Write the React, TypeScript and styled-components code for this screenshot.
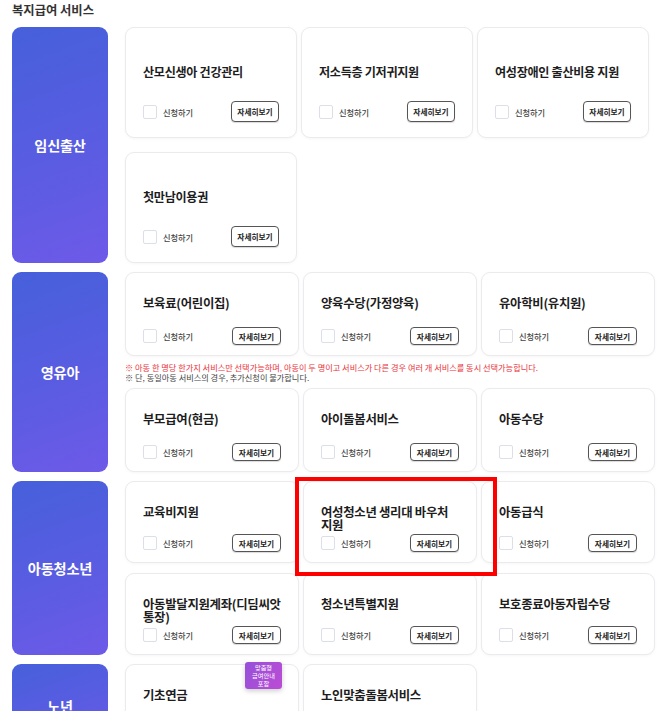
import styled, { createGlobalStyle } from "styled-components";

const Global = createGlobalStyle`
  html, body { margin: 0; padding: 0; background: #fff; }
  body { font-family: "Noto Sans CJK KR", "Noto Sans", sans-serif; color: #222; }
`;

const Frame = styled.div`
  height: 711px;
  overflow: hidden;
  padding: 0 8px 0 12px;
`;

const PageTitle = styled.h2`
  margin: 0;
  padding-top: 2px;
  height: 25px;
  font-size: 12.3px;
  line-height: 16px;
  font-weight: 700;
  color: #333;
`;

const Sections = styled.div`
  display: flex;
  flex-direction: column;
  gap: 9px;
`;

const Section = styled.section`
  display: flex;
  gap: 17px;
  align-items: stretch;
`;

const Category = styled.div`
  width: 96px;
  flex-shrink: 0;
  border-radius: 9px;
  background: linear-gradient(160deg, #4660da 0%, #5a5ce2 55%, #6e5ae8 100%);
  display: flex;
  align-items: center;
  justify-content: center;
  color: #fff;
  font-size: 14.2px;
  font-weight: 700;
  letter-spacing: -0.2px;
`;

const Body = styled.div`
  display: flex;
  flex-direction: column;
`;

const Grid = styled.div<{ $col: number; $rowGap: number }>`
  display: grid;
  grid-template-columns: repeat(3, ${p => p.$col}px);
  column-gap: 4px;
  row-gap: ${p => p.$rowGap}px;
`;

const Card = styled.div<{ $large?: boolean; $h: number }>`
  position: relative;
  box-sizing: border-box;
  height: ${p => p.$h}px;
  background: #fff;
  border: 1px solid #ebebee;
  border-radius: 9px;
  box-shadow: 0 1px 3px rgba(0, 0, 0, 0.04);
  display: flex;
  flex-direction: column;
  padding: ${p => (p.$large ? "37px 17px 15px" : "24px 17px 10px")};
`;

const CardTitle = styled.div<{ $large?: boolean }>`
  font-size: ${p => (p.$large ? "12.1px" : "12.4px")};
  line-height: 13px;
  font-weight: 700;
  color: #1d1d1d;
  letter-spacing: -0.3px;
  white-space: nowrap;
`;

const ActionRow = styled.div`
  margin-top: auto;
  display: flex;
  align-items: center;
  justify-content: space-between;
`;

const Check = styled.label`
  display: flex;
  align-items: center;
  gap: 6px;
  font-size: 8.2px;
  color: #444;
  font-weight: 500;
`;

const Box = styled.span`
  width: 12px;
  height: 12px;
  border: 1px solid #dcdfe8;
  border-radius: 2px;
  background: #fff;
`;

const DetailButton = styled.button<{ $large?: boolean }>`
  height: ${p => (p.$large ? "21px" : "18px")};
  width: ${p => (p.$large ? "48px" : "49px")};
  padding: 0;
  border: 1.5px solid #555;
  border-radius: 4px;
  background: #fff;
  font-family: inherit;
  font-size: 7.7px;
  font-weight: 700;
  color: #222;
  box-shadow: 0 1px 1px rgba(0, 0, 0, 0.15);
`;

const Notice = styled.div`
  height: 32px;
  box-sizing: border-box;
  padding-top: 6px;
  font-size: 8.2px;
  line-height: 10px;
  color: #444;
  white-space: nowrap;
`;

const Warn = styled.div`
  color: #e8333a;
`;

const Badge = styled.div`
  position: absolute;
  top: -3px;
  right: 16px;
  width: 37px;
  height: 27px;
  border-radius: 3px;
  background: linear-gradient(120deg, #9650d9 0%, #bc4cd5 100%);
  box-shadow: 0 2px 5px rgba(0, 0, 0, 0.2);
  color: #fff;
  font-size: 6.2px;
  line-height: 8px;
  text-align: center;
  white-space: nowrap;
  display: flex;
  flex-direction: column;
  justify-content: center;
`;

const Highlight = styled.div`
  position: absolute;
  z-index: 5;
  left: -9px;
  top: -5px;
  right: -21px;
  bottom: -14px;
  border: 4px solid #ff0000;
  pointer-events: none;
`;

type Item = { title: string[]; badge?: boolean; mark?: boolean };

function ServiceCard({ item, large, h }: { item: Item; large?: boolean; h: number }) {
  return (
    <Card $large={large} $h={h}>
      {item.badge && (
        <Badge>
          <span>맞춤형</span>
          <span>급여안내</span>
          <span>포함</span>
        </Badge>
      )}
      {item.mark && <Highlight />}
      <CardTitle $large={large}>
        {item.title.map((t, i) => (
          <div key={i}>{t}</div>
        ))}
      </CardTitle>
      <ActionRow>
        <Check>
          <Box />
          신청하기
        </Check>
        <DetailButton $large={large}>자세히보기</DetailButton>
      </ActionRow>
    </Card>
  );
}

const t = (...s: string[]): Item => ({ title: s });

export default function App() {
  return (
    <>
      <Global />
      <Frame>
        <PageTitle>복지급여 서비스</PageTitle>
        <Sections>
          <Section>
            <Category>임신출산</Category>
            <Body>
              <Grid $col={172} $rowGap={14}>
                {[t("산모신생아 건강관리"), t("저소득층 기저귀지원"), t("여성장애인 출산비용 지원"), t("첫만남이용권")].map(
                  (it, i) => (
                    <ServiceCard key={i} item={it} large h={111} />
                  )
                )}
              </Grid>
            </Body>
          </Section>

          <Section>
            <Category>영유아</Category>
            <Body>
              <Grid $col={174} $rowGap={0}>
                {[t("보육료(어린이집)"), t("양육수당(가정양육)"), t("유아학비(유치원)")].map((it, i) => (
                  <ServiceCard key={i} item={it} h={84} />
                ))}
              </Grid>
              <Notice>
                <Warn>
                  ※ 아동 한 명당 한가지 서비스만 선택가능하며, 아동이 두 명이고 서비스가 다른 경우 여러 개 서비스를 동시 선택가능합니다.
                </Warn>
                <div>※ 단, 동일아동 서비스의 경우, 추가신청이 불가합니다.</div>
              </Notice>
              <Grid $col={174} $rowGap={0}>
                {[t("부모급여(현금)"), t("아이돌봄서비스"), t("아동수당")].map((it, i) => (
                  <ServiceCard key={i} item={it} h={84} />
                ))}
              </Grid>
            </Body>
          </Section>

          <Section>
            <Category>아동청소년</Category>
            <Body>
              <Grid $col={174} $rowGap={10}>
                {[
                  t("교육비지원"),
                  { title: ["여성청소년 생리대 바우처", "지원"], mark: true },
                  t("아동급식"),
                  t("아동발달지원계좌(디딤씨앗", "통장)"),
                  t("청소년특별지원"),
                  t("보호종료아동자립수당"),
                ].map((it, i) => (
                  <ServiceCard key={i} item={it} h={82} />
                ))}
              </Grid>
            </Body>
          </Section>

          <Section>
            <Category>노년</Category>
            <Body>
              <Grid $col={174} $rowGap={0}>
                {[{ title: ["기초연금"], badge: true }, t("노인맞춤돌봄서비스")].map((it, i) => (
                  <ServiceCard key={i} item={it} h={84} />
                ))}
              </Grid>
            </Body>
          </Section>
        </Sections>
      </Frame>
    </>
  );
}
